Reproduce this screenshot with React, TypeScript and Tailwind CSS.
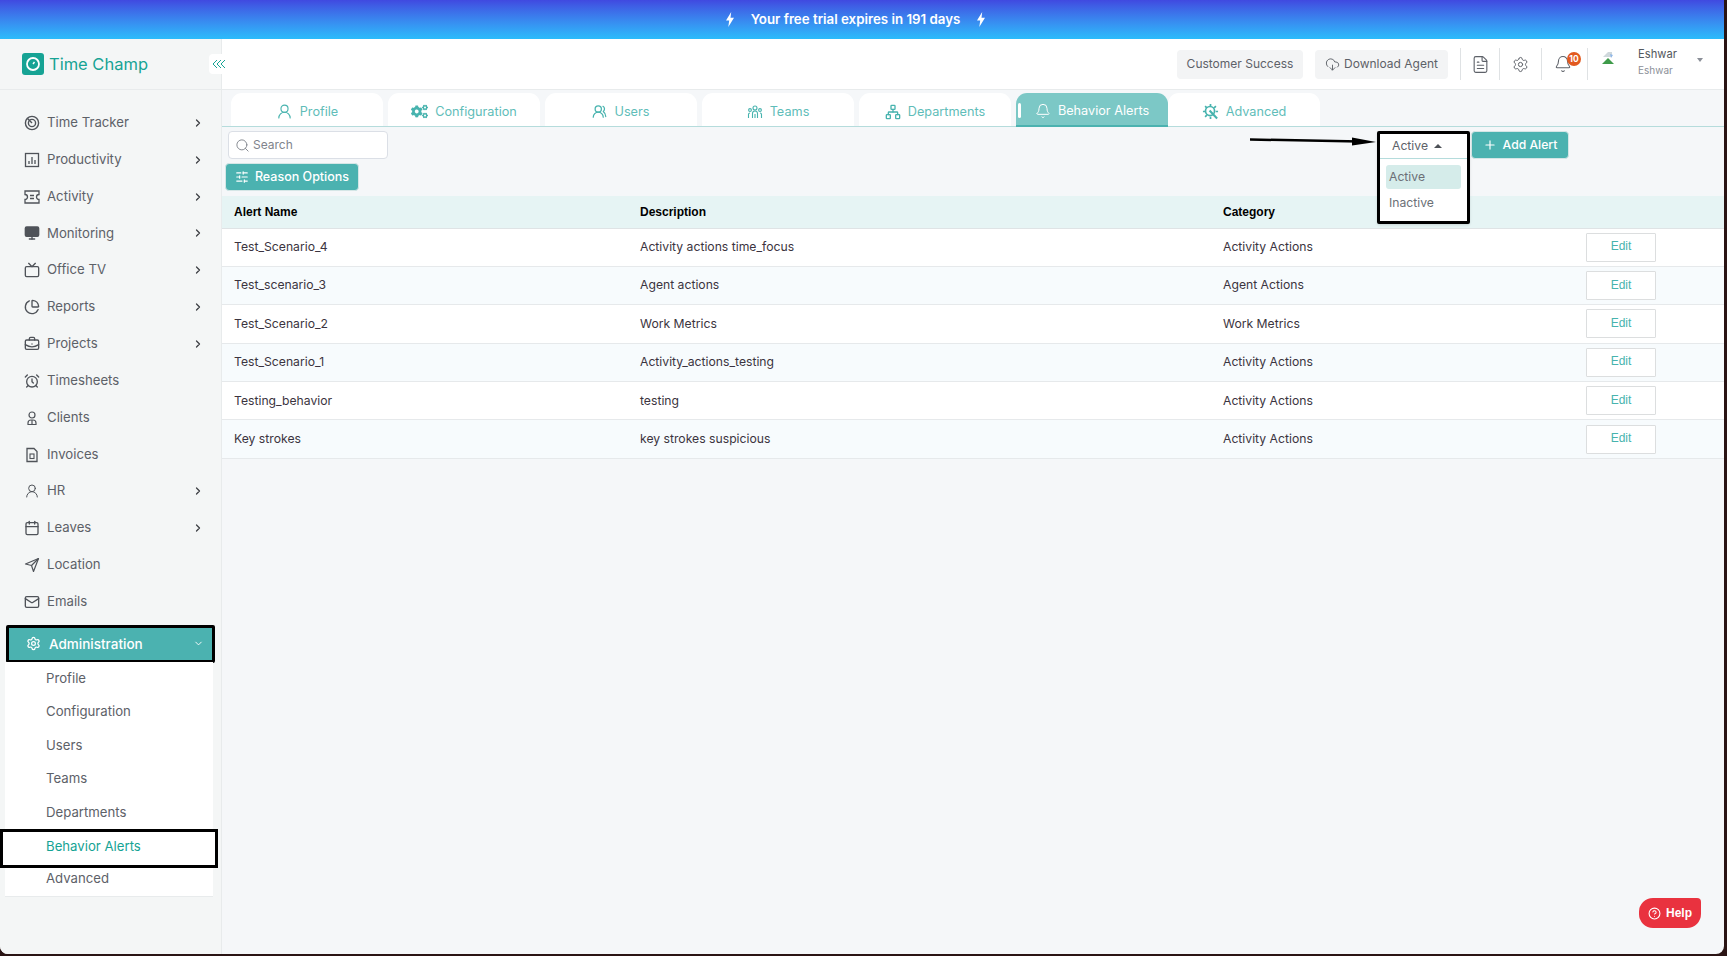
import {
  AlarmClock,
  Bell,
  BriefcaseBusiness,
  Calendar,
  ChartPie,
  ChevronDown,
  ChevronRight,
  CircleHelp,
  CloudDownload,
  FileText,
  Mail,
  Monitor,
  Network,
  Plus,
  Search,
  Settings,
  SlidersHorizontal,
  Tv,
  UserRound,
  UsersRound,
} from "lucide-react";
import { FaCogs } from "react-icons/fa";
import type { ReactNode } from "react";

const poppins = "font-['Inter','Noto_Sans',sans-serif]";

const TimeTrackerIcon = () => (
  <svg viewBox="0 0 16 16" className="h-4 w-4" fill="none" stroke="currentColor" strokeWidth="1.4">
    <circle cx="8" cy="8" r="6.6" />
    <circle cx="8" cy="8" r="3.6" />
    <path d="M3.5 3.5 8 8" />
  </svg>
);

const ChartBoxIcon = () => (
  <svg viewBox="0 0 16 16" className="h-4 w-4" fill="none" stroke="currentColor" strokeWidth="1.3">
    <rect x="1.5" y="1.5" width="13" height="13" />
    <path d="M5 12V9M8 12V5M11 12V8" />
  </svg>
);

const TicketIcon = () => (
  <svg viewBox="0 0 16 16" className="h-4 w-4" fill="none" stroke="currentColor" strokeWidth="1.3">
    <path d="M1 2h14v3.5a2.5 2.5 0 0 0 0 5V14H1v-3.5a2.5 2.5 0 0 0 0-5z" />
    <path d="M6 6.5h4M6 9.5h4" />
  </svg>
);

const ClientIcon = () => (
  <svg viewBox="0 0 16 16" className="h-4 w-4" fill="none" stroke="currentColor" strokeWidth="1.2">
    <circle cx="8" cy="5" r="3" />
    <path d="M4 14.5v-1.5a3 3 0 0 1 3-3h2a3 3 0 0 1 3 3v1.5z" />
    <path d="M8 10v4.5" />
  </svg>
);

const InvoiceIcon = () => (
  <svg viewBox="0 0 16 16" className="h-4 w-4" fill="none" stroke="currentColor" strokeWidth="1.3">
    <path d="M3 1.5h7l3 3v10H3z" />
    <rect x="6" y="7" width="4" height="4.5" strokeWidth="1.1" />
  </svg>
);

const LocationIcon = () => (
  <svg viewBox="0 0 16 16" className="h-4 w-4" fill="none" stroke="currentColor" strokeWidth="1.2" strokeLinejoin="round">
    <path d="M14.5 1.5 1.5 7l6 1.5 2 6z" />
    <path d="M7.5 8.5 14.5 1.5" />
  </svg>
);

const TeamsIcon = () => (
  <svg viewBox="0 0 16 16" className="h-4 w-4" fill="none" stroke="currentColor" strokeWidth="1.1">
    <circle cx="8" cy="4" r="2" />
    <circle cx="3" cy="6" r="1.4" />
    <circle cx="13" cy="6" r="1.4" />
    <path d="M5.5 14V9.5a2.5 2.5 0 0 1 5 0V14M1.5 14v-3.5A1.5 1.5 0 0 1 3 9M14.5 14v-3.5A1.5 1.5 0 0 0 13 9M8 10v4" />
  </svg>
);

const AdvancedIcon = () => (
  <svg viewBox="0 0 18 18" className="h-[17px] w-[17px]" fill="none" stroke="currentColor" strokeWidth="1.8">
    <path d="M9 1v2.5M9 14.5V17M1 9h2.5M14.5 9H17M3.3 3.3l1.8 1.8M3.3 14.7l1.8-1.8M14.7 3.3l-1.8 1.8" />
    <circle cx="8.5" cy="8.5" r="4.8" />
    <path d="M8 8l8 8.5" strokeWidth="2.2" />
  </svg>
);

const LogoIcon = () => (
  <div className="flex h-[22px] w-[22px] items-center justify-center rounded-[3px] bg-[#16a394]">
    <svg viewBox="0 0 16 16" className="h-4 w-4" fill="none" stroke="#fff" strokeWidth="1.8">
      <circle cx="8" cy="8" r="6" />
      <path d="M8 8l1.5-2" strokeWidth="1.4" />
    </svg>
  </div>
);

const BoltIcon = () => (
  <svg viewBox="0 0 8 15" className="h-[15px] w-[8px]" fill="#fff">
    <path d="M5.2 0 0 8.5h3.2L2.3 15 8 5.8H4.5z" />
  </svg>
);

const CollapseIcon = () => (
  <svg viewBox="0 0 14 10" className="h-[10px] w-[14px]" fill="none" stroke="currentColor" strokeWidth="1">
    <path d="M5 1 1 5l4 4M9 1 5 5l4 4M13 1 9 5l4 4" />
  </svg>
);

const navItems: { label: string; icon: ReactNode; sub?: boolean }[] = [
  { label: "Time Tracker", icon: <TimeTrackerIcon />, sub: true },
  { label: "Productivity", icon: <ChartBoxIcon />, sub: true },
  { label: "Activity", icon: <TicketIcon />, sub: true },
  { label: "Monitoring", icon: <Monitor size={16} fill="currentColor" />, sub: true },
  { label: "Office TV", icon: <Tv size={16} />, sub: true },
  { label: "Reports", icon: <ChartPie size={16} />, sub: true },
  { label: "Projects", icon: <BriefcaseBusiness size={16} />, sub: true },
  { label: "Timesheets", icon: <AlarmClock size={16} /> },
  { label: "Clients", icon: <ClientIcon /> },
  { label: "Invoices", icon: <InvoiceIcon /> },
  { label: "HR", icon: <UserRound size={16} strokeWidth={1.5} />, sub: true },
  { label: "Leaves", icon: <Calendar size={16} />, sub: true },
  { label: "Location", icon: <LocationIcon /> },
  { label: "Emails", icon: <Mail size={16} /> },
];

const adminItems = ["Profile", "Configuration", "Users", "Teams", "Departments", "Behavior Alerts", "Advanced"];

const tabs: { label: string; icon: ReactNode }[] = [
  { label: "Profile", icon: <UserRound size={17} strokeWidth={1.6} /> },
  { label: "Configuration", icon: <FaCogs size={17} /> },
  { label: "Users", icon: <UsersRound size={15} /> },
  { label: "Teams", icon: <TeamsIcon /> },
  { label: "Departments", icon: <Network size={16} /> },
  { label: "Behavior Alerts", icon: <Bell size={16} strokeWidth={1.5} /> },
  { label: "Advanced", icon: <AdvancedIcon /> },
];

const rows = [
  ["Test_Scenario_4", "Activity actions time_focus", "Activity Actions"],
  ["Test_scenario_3", "Agent actions", "Agent Actions"],
  ["Test_Scenario_2", "Work Metrics", "Work Metrics"],
  ["Test_Scenario_1", "Activity_actions_testing", "Activity Actions"],
  ["Testing_behavior", "testing", "Activity Actions"],
  ["Key strokes", "key strokes suspicious", "Activity Actions"],
];

const Sidebar = () => (
  <aside className="relative z-10 flex w-[222px] shrink-0 flex-col border-r border-[#e8ebec] bg-[#f4f6f6]">
    <div className="relative flex h-[51px] shrink-0 items-center border-b border-[#e8ebec] pl-[22px]">
      <LogoIcon />
      <span className="ml-[5px] mt-[1px] text-[16.5px] text-[#16a394]">Time Champ</span>
      <button className="absolute right-[-8px] top-[15px] flex h-5 w-5 items-center justify-center rounded bg-white text-[#16a394]">
        <CollapseIcon />
      </button>
    </div>
    <nav className="mt-[14.5px] flex flex-col text-[13.2px] text-[#5d6168]">
      {navItems.map((item) => (
        <div key={item.label} className="flex h-[36.85px] items-center pl-[24px] pr-[17px]">
          <span className="flex w-[23px] text-[#4f5359]">{item.icon}</span>
          <span>{item.label}</span>
          {item.sub && <ChevronRight size={12} strokeWidth={2.5} className="ml-auto text-[#3c3f44]" />}
        </div>
      ))}
    </nav>
    <div className="ml-[6px] mt-[4.5px] flex h-[38px] w-[209px] items-center rounded-[2px] border-[3px] border-black bg-[#4bb2b0] pl-[17px] pr-[8px] text-[13.5px] font-medium text-white">
      <Settings size={15} />
      <span className="ml-[8px]">Administration</span>
      <ChevronDown size={11} className="ml-auto" />
    </div>
    <div className="ml-[5px] mt-[-1px] w-[208px] border-b border-[#e8ebec] bg-white text-[13.2px] text-[#5d6168]">
      {adminItems.map((item) =>
        item === "Behavior Alerts" ? (
          <div
            key={item}
            className="mb-[-6px] ml-[-5px] flex h-[39px] w-[218px] items-center border-[3px] border-black bg-white pb-[4px] pl-[43px] text-[#16a394]"
          >
            {item}
          </div>
        ) : (
          <div key={item} className="relative flex h-[33.5px] items-center pl-[41px]">
            {item}
          </div>
        )
      )}
    </div>
  </aside>
);

const Header = () => (
  <header className="flex h-[51px] shrink-0 items-center border-b border-[#e8ebec] bg-white text-[12px] text-[#5d6168]">
    <div className="ml-auto flex items-center">
      <div className="flex h-[29px] w-[126px] items-center justify-center rounded bg-[#f3f4f5]">Customer Success</div>
      <div className="ml-[12px] flex h-[29px] w-[133px] items-center justify-center gap-1 rounded bg-[#f3f4f5]">
        <CloudDownload size={15} strokeWidth={1.5} />
        Download Agent
      </div>
      <div className="ml-[12px] flex h-[32px] w-[39px] items-center justify-center border-l border-[#dfe2e4]">
        <FileText size={19} strokeWidth={1.4} />
      </div>
      <div className="flex h-[32px] w-[42px] items-center justify-center border-l border-[#dfe2e4]">
        <Settings size={17} strokeWidth={1.4} />
      </div>
      <div className="relative flex h-[32px] w-[46px] items-center justify-center border-l border-[#dfe2e4] pr-[4px]">
        <Bell size={18} strokeWidth={1.4} />
        <span className="absolute left-[25px] top-[4px] flex h-[14px] w-[14px] items-center justify-center rounded-full bg-[#e2591f] text-[8.5px] font-bold text-white">
          10
        </span>
      </div>
      <div className="flex h-[32px] w-[137px] items-start border-l border-[#dfe2e4] pl-[13px]">
        <svg viewBox="0 0 14 14" className="mt-[3px] h-[14px] w-[14px]">
          <path d="M1 13 7 7l6 6z" fill="#3f9b4a" />
          <path d="M2 6 7 1h4v5z" fill="#cfd8dc" />
          <path d="M9 3l3 1-2 3z" fill="#8fb6e8" />
        </svg>
        <div className="ml-[23px] mt-[1px] flex flex-col leading-none">
          <span className="text-[11.2px] text-[#54585e]">Eshwar</span>
          <span className="mt-[5px] text-[10px] text-[#8b8f98]">Eshwar</span>
        </div>
        <span className="ml-[20px] mt-[10px] h-0 w-0 border-x-[3px] border-t-[4px] border-x-transparent border-t-[#8b8f98]" />
      </div>
    </div>
  </header>
);

const Tabs = () => (
  <div className="mt-[3px] flex h-[34px] shrink-0 border-b border-[#b5dcdc] pl-[9px] text-[12.7px]">
    <div className="flex">
      {tabs.map((tab) => {
        const active = tab.label === "Behavior Alerts";
        return (
          <div
            key={tab.label}
            className={
              active
                ? "relative flex h-[34px] w-[152px] items-center justify-center gap-[7px] rounded-t-[11px] border-b-2 border-[#4bb2b0] bg-[#7cc8c6] pt-[4px] text-white"
                : "mr-[5px] flex h-[33px] w-[152px] items-center justify-center gap-[7px] rounded-t-[11px] bg-white pt-[4px] text-[#5fbdb9] last:mr-0"
            }
          >
            {active && <span className="absolute left-[2px] top-[10px] h-[15px] w-[3px] rounded-sm bg-white" />}
            <span className={active ? "" : "text-[#47b3ae]"}>{tab.icon}</span>
            {tab.label}
          </div>
        );
      })}
    </div>
  </div>
);

const Toolbar = () => (
  <div className="relative flex h-[69px] shrink-0 flex-col">
    <div className="flex items-start pl-[6px]">
      <div className="mt-[4px] flex h-[28px] w-[160px] items-center rounded border border-[#dbdfe6] bg-white pl-[6px] text-[12px] text-[#80848c]">
        <Search size={15} strokeWidth={1.5} />
        <span className="ml-[3px]">Search</span>
      </div>
      <div className="relative ml-auto mr-[155px] mt-[4px] flex">
        <svg viewBox="0 0 128 12" className="absolute left-[-127px] top-[4px] h-[12px] w-[128px]">
          <path d="M0 4.5 110 6.5" stroke="#000" strokeWidth="2.5" />
          <path d="M102 2.5 126 7 102 10.5z" fill="#000" />
        </svg>
        <div className="relative mr-[1px] w-[93px]">
          <div className="absolute left-0 top-[0px] z-10 h-[93px] w-[93px] rounded-[2px] border-[3px] border-black bg-white shadow-sm">
            <div className="flex h-[25px] items-center border-b border-[#b5dcdc] pl-[12px] text-[12.2px] text-[#5d6168]">
              Active
              <span className="ml-[6px] h-0 w-0 border-x-[4px] border-b-[4px] border-x-transparent border-b-[#4d5157]" />
            </div>
            <div className="mt-[6px] px-[6px] text-[12.2px] text-[#6b6f76]">
              <div className="flex h-[24px] items-center rounded-[3px] bg-[#d5ecea] pl-[3px]">Active</div>
              <div className="mt-[2px] flex h-[24px] items-center pl-[3px]">Inactive</div>
            </div>
          </div>
        </div>
        <div className="flex h-[28px] w-[98px] items-center justify-center gap-[6px] rounded border border-[#d5e6e6] bg-[#4bb2b0] text-[12.2px] font-medium text-white">
          <Plus size={14} />
          Add Alert
        </div>
      </div>
    </div>
    <div className="ml-[3px] mt-[4px] flex h-[28px] w-[134px] items-center justify-center gap-[6px] rounded border border-[#d5e6e6] bg-[#4bb2b0] text-[12.5px] font-medium text-white">
      <SlidersHorizontal size={14} />
      Reason Options
    </div>
  </div>
);

const AlertsTable = () => (
  <table className="w-full table-fixed border-collapse text-left text-[12.2px] text-[#3b3440]">
    <colgroup>
      <col className="w-[418px]" />
      <col className="w-[583px]" />
      <col className="w-[363px]" />
      <col />
    </colgroup>
    <thead>
      <tr className="h-[32px] border-b border-[#dfe3e5] bg-[#e6f4f4] font-['Liberation_Sans',sans-serif] text-[12px] font-bold text-black">
        <th className="pl-[12px] font-bold">Alert Name</th>
        <th className="font-bold">Description</th>
        <th className="font-bold">Category</th>
        <th />
      </tr>
    </thead>
    <tbody>
      {rows.map((row, i) => (
        <tr
          key={row[0]}
          className={i % 2 === 0 ? "h-[38.4px] border-b border-[#e6e9eb] bg-white" : "h-[38.4px] border-b border-[#e6e9eb] bg-[#f7fbfd]"}
        >
          <td className="pl-[12px]">{row[0]}</td>
          <td>{row[1]}</td>
          <td>{row[2]}</td>
          <td>
            <button className="h-[29px] w-[70px] rounded-[1px] border border-[#dcdedf] bg-white pb-[2px] font-['Liberation_Sans',sans-serif] text-[12px] text-[#47b3ae]">
              Edit
            </button>
          </td>
        </tr>
      ))}
    </tbody>
  </table>
);

export default function App() {
  return (
    <div className={`h-[956px] w-full overflow-hidden bg-[#2a1414] ${poppins}`}>
      <div className="flex h-[954px] w-[1724px] flex-col overflow-hidden rounded-b-[8px] bg-[#f5f7f9]">
        <div className="flex h-[39px] shrink-0 items-center justify-center gap-[17px] bg-gradient-to-b from-[#4049e0] to-[#2bbcfb] pr-[13px] text-[13.3px] font-semibold text-white">
          <BoltIcon />
          <span>Your free trial expires in 191 days</span>
          <BoltIcon />
        </div>
        <div className="flex min-h-0 flex-1">
          <Sidebar />
          <main className="relative flex min-w-0 flex-1 flex-col">
            <Header />
            <Tabs />
            <Toolbar />
            <AlertsTable />
            <div className="absolute bottom-[26px] right-[23px] flex h-[30px] w-[62px] items-center justify-center gap-[5px] rounded-[14px] rounded-tr-[4px] bg-[#e9323f] font-['Liberation_Sans',sans-serif] text-[12px] font-bold text-white">
              <CircleHelp size={13} />
              Help
            </div>
          </main>
        </div>
      </div>
    </div>
  );
}
